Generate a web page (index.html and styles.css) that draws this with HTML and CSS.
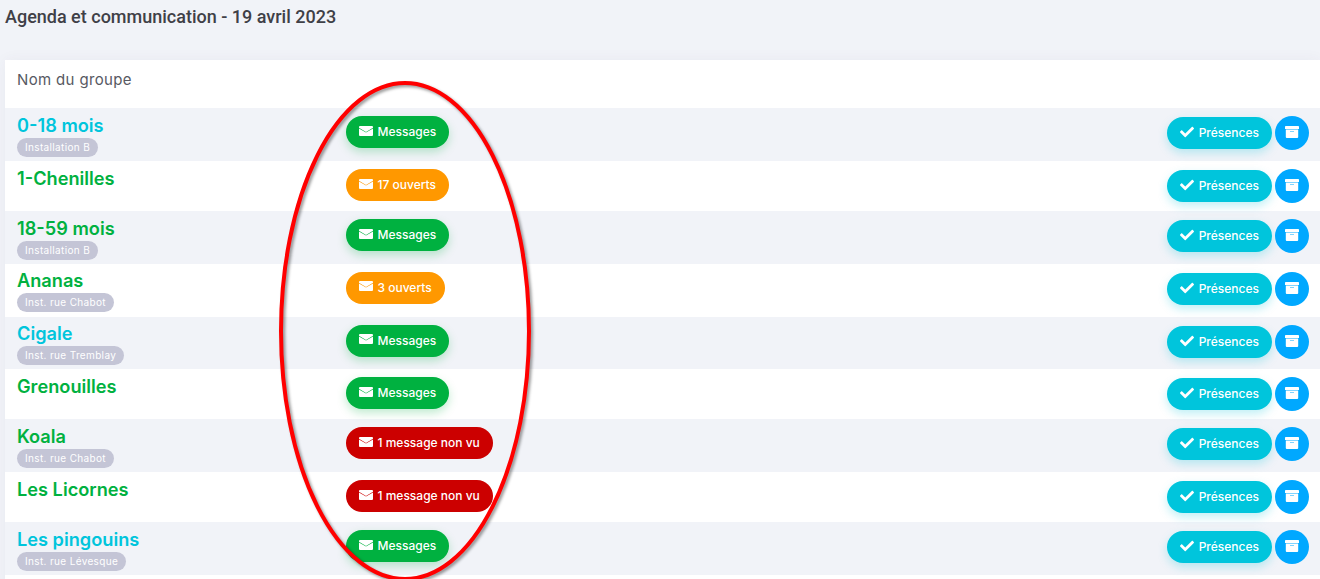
FILE: index.html
```html
<!DOCTYPE html>
<html lang="fr">
<head>
    <meta charset="UTF-8">
    <meta name="viewport" content="width=device-width, initial-scale=1.0">
    <title>Agenda et communication</title>
    <link rel="stylesheet" href="styles.css">
</head>
<body>

<svg class="icon-defs" width="0" height="0">
    <symbol id="i-envelope" viewBox="0 0 14 10"><path d="M0 1a1 1 0 0 1 1-1h12a1 1 0 0 1 1 1v.7L7 5.9 0 1.7z"/><path d="M0 2.4 7 6.6l7-4.2V9a1 1 0 0 1-1 1H1a1 1 0 0 1-1-1z"/></symbol>
    <symbol id="i-check" viewBox="0 0 512 512"><path d="M173.898 439.404l-166.4-166.4c-9.997-9.997-9.997-26.206 0-36.204l36.203-36.204c9.997-9.998 26.207-9.998 36.204 0L192 312.69 432.095 72.596c9.997-9.997 26.207-9.997 36.204 0l36.203 36.204c9.997 9.997 9.997 26.206 0 36.204l-294.4 294.401c-9.998 9.997-26.207 9.997-36.204-.001z"/></symbol>
    <symbol id="i-archive" viewBox="0 0 14 12"><path d="M.8 0h12.4a.8.8 0 0 1 .8.8V3H0V.8A.8.8 0 0 1 .8 0z"/><path d="M.8 3.5h12.4V11a1 1 0 0 1-1 1H1.8a1 1 0 0 1-1-1zM5 5.4v.6h4v-.6z" fill-rule="evenodd"/></symbol>
</svg>

<h1 class="page-title">Agenda et communication - 19 avril 2023</h1>

<div class="card">
    <div class="card-head">Nom du groupe</div>

    <div class="row tall">
        <div class="group"><div class="group-name cyan">0-18 mois</div><span class="tag">Installation B</span></div>
        <div class="msg-col"><a class="pill green"><svg class="ico"><use href="#i-envelope"/></svg>Messages</a></div>
        <div class="actions"><a class="btn-presence"><svg class="ico-check"><use href="#i-check"/></svg>Présences</a><a class="btn-round"><svg class="ico-box"><use href="#i-archive"/></svg></a></div>
    </div>
    <div class="row">
        <div class="group"><div class="group-name green-text">1-Chenilles</div></div>
        <div class="msg-col"><a class="pill orange"><svg class="ico"><use href="#i-envelope"/></svg>17 ouverts</a></div>
        <div class="actions"><a class="btn-presence"><svg class="ico-check"><use href="#i-check"/></svg>Présences</a><a class="btn-round"><svg class="ico-box"><use href="#i-archive"/></svg></a></div>
    </div>
    <div class="row tall">
        <div class="group"><div class="group-name green-text">18-59 mois</div><span class="tag">Installation B</span></div>
        <div class="msg-col"><a class="pill green"><svg class="ico"><use href="#i-envelope"/></svg>Messages</a></div>
        <div class="actions"><a class="btn-presence"><svg class="ico-check"><use href="#i-check"/></svg>Présences</a><a class="btn-round"><svg class="ico-box"><use href="#i-archive"/></svg></a></div>
    </div>
    <div class="row tall">
        <div class="group"><div class="group-name green-text">Ananas</div><span class="tag">Inst. rue Chabot</span></div>
        <div class="msg-col"><a class="pill orange"><svg class="ico"><use href="#i-envelope"/></svg>3 ouverts</a></div>
        <div class="actions"><a class="btn-presence"><svg class="ico-check"><use href="#i-check"/></svg>Présences</a><a class="btn-round"><svg class="ico-box"><use href="#i-archive"/></svg></a></div>
    </div>
    <div class="row tall">
        <div class="group"><div class="group-name cyan">Cigale</div><span class="tag">Inst. rue Tremblay</span></div>
        <div class="msg-col"><a class="pill green"><svg class="ico"><use href="#i-envelope"/></svg>Messages</a></div>
        <div class="actions"><a class="btn-presence"><svg class="ico-check"><use href="#i-check"/></svg>Présences</a><a class="btn-round"><svg class="ico-box"><use href="#i-archive"/></svg></a></div>
    </div>
    <div class="row">
        <div class="group"><div class="group-name green-text">Grenouilles</div></div>
        <div class="msg-col"><a class="pill green"><svg class="ico"><use href="#i-envelope"/></svg>Messages</a></div>
        <div class="actions"><a class="btn-presence"><svg class="ico-check"><use href="#i-check"/></svg>Présences</a><a class="btn-round"><svg class="ico-box"><use href="#i-archive"/></svg></a></div>
    </div>
    <div class="row tall">
        <div class="group"><div class="group-name green-text">Koala</div><span class="tag">Inst. rue Chabot</span></div>
        <div class="msg-col"><a class="pill red"><svg class="ico"><use href="#i-envelope"/></svg>1 message non vu</a></div>
        <div class="actions"><a class="btn-presence"><svg class="ico-check"><use href="#i-check"/></svg>Présences</a><a class="btn-round"><svg class="ico-box"><use href="#i-archive"/></svg></a></div>
    </div>
    <div class="row">
        <div class="group"><div class="group-name green-text">Les Licornes</div></div>
        <div class="msg-col"><a class="pill red"><svg class="ico"><use href="#i-envelope"/></svg>1 message non vu</a></div>
        <div class="actions"><a class="btn-presence"><svg class="ico-check"><use href="#i-check"/></svg>Présences</a><a class="btn-round"><svg class="ico-box"><use href="#i-archive"/></svg></a></div>
    </div>
    <div class="row tall">
        <div class="group"><div class="group-name cyan">Les pingouins</div><span class="tag">Inst. rue Lévesque</span></div>
        <div class="msg-col"><a class="pill green"><svg class="ico"><use href="#i-envelope"/></svg>Messages</a></div>
        <div class="actions"><a class="btn-presence"><svg class="ico-check"><use href="#i-check"/></svg>Présences</a><a class="btn-round"><svg class="ico-box"><use href="#i-archive"/></svg></a></div>
    </div>
</div>

<!-- red hand-drawn circle over the message column -->
<svg class="marker" width="270" height="520" viewBox="0 0 270 520">
    <ellipse cx="125" cy="250" rx="124" ry="248"/>
</svg>

</body>
</html>
```

FILE: styles.css
```css
* {
    margin: 0;
    padding: 0;
    box-sizing: border-box;
}

html, body {
    height: 579px;
    overflow: hidden;
}

body {
    position: relative;
    background-color: #f1f3f8;
    color: #3f4047;
    font-family: Inter, 'Open Sans', sans-serif;
}

.icon-defs {
    position: absolute;
}

.page-title {
    height: 60px;
    padding: 6px 0 0 5px;
    font-family: Roboto, sans-serif;
    font-size: 18px;
    font-weight: 500;
    line-height: 21px;
    color: #3f4047;
}

.card {
    margin-left: 5px;
    height: 530px;
    background-color: #fff;
    box-shadow: 0 0 13px rgba(82, 63, 105, 0.05);
}

.card-head {
    height: 48.3px;
    padding: 10px 12px 0;
    font-size: 15px;
    line-height: 20px;
    letter-spacing: 0.35px;
    color: #575962;
}

.row {
    display: flex;
    align-items: flex-start;
    height: 50px;
    padding: 6.5px 11px 0 12px;
}

.row.tall {
    height: 52.8px;
}

.row:nth-child(even) {
    background-color: #f1f3f8;
}

.group {
    width: 329px;
}

.group-name {
    font-size: 18.2px;
    font-weight: 600;
    line-height: 21px;
}

.cyan {
    color: #00c5dc;
}

.green-text {
    color: #00b140;
}

.tag {
    display: inline-block;
    height: 19px;
    margin-top: 2px;
    padding: 0 8px;
    border-radius: 10px;
    background-color: #c4c5d6;
    color: #fff;
    font-size: 10px;
    line-height: 19px;
    letter-spacing: 0.35px;
    vertical-align: top;
}

.msg-col {
    flex-grow: 1;
    padding-top: 1.5px;
}

.pill {
    display: inline-flex;
    align-items: center;
    height: 32px;
    padding: 0 13px 1px 13px;
    border-radius: 16px;
    color: #fff;
    font-size: 12px;
    font-weight: 500;
}

.pill.green {
    background-color: #00b140;
    box-shadow: 0 4px 10px rgba(0, 177, 64, 0.25);
}

.pill.orange {
    background-color: #ff9800;
}

.pill.red {
    background-color: #cc0000;
}

.ico {
    width: 14px;
    height: 10px;
    margin-right: 4.5px;
    margin-top: -2px;
    fill: #fff;
}

.ico-check {
    width: 14px;
    height: 14px;
    margin-right: 5px;
    margin-top: -1px;
    fill: #fff;
}

.actions {
    display: flex;
    align-items: center;
    gap: 3px;
    padding-top: 1.5px;
}

.btn-presence {
    display: inline-flex;
    align-items: center;
    height: 32px;
    padding: 0 13px 1px;
    border-radius: 16px;
    background-color: #00c5dc;
    box-shadow: 0 4px 10px rgba(0, 197, 220, 0.25);
    color: #fff;
    font-size: 12px;
    font-weight: 500;
}

.btn-round {
    display: flex;
    align-items: center;
    justify-content: center;
    width: 34px;
    height: 34px;
    border-radius: 50%;
    background-color: #00a8ff;
}

.ico-box {
    width: 14px;
    height: 12px;
    margin-top: -2px;
    fill: #fff;
}

.marker {
    position: absolute;
    left: 280px;
    top: 81px;
    overflow: visible;
    filter: drop-shadow(2px 2px 1.5px rgba(0, 0, 0, 0.4));
}

.marker ellipse {
    fill: none;
    stroke: #ff0000;
    stroke-width: 4;
}
```
